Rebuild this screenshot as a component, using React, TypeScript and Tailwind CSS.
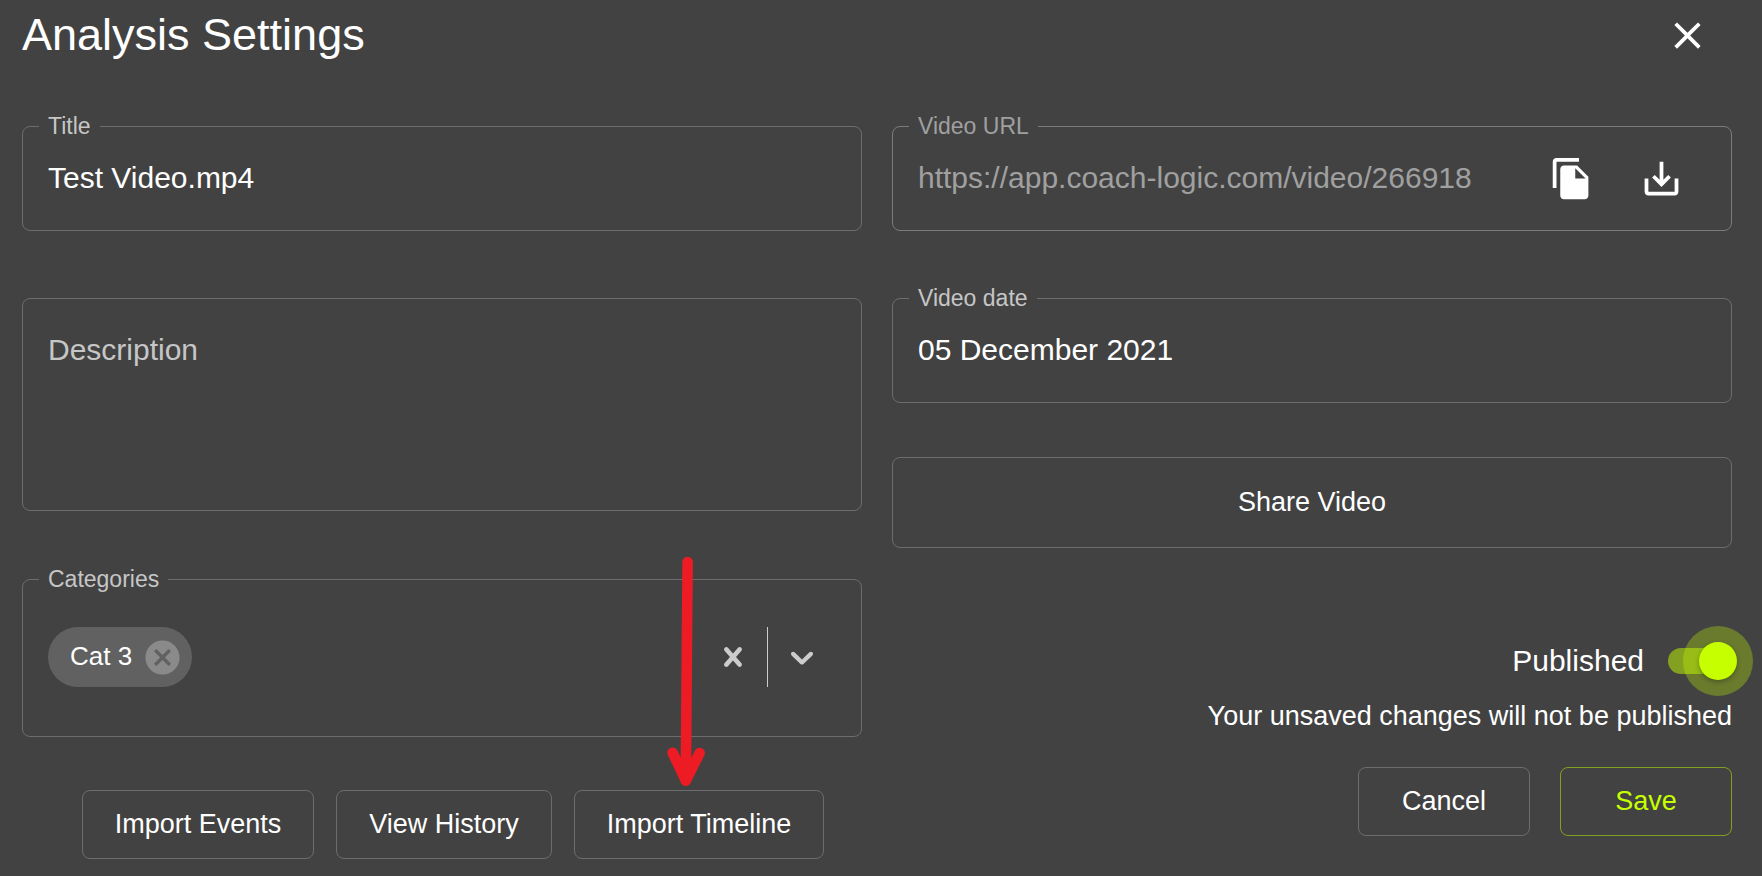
import { useState, type ReactNode } from "react";
import { MdCancel, MdClose, MdFileCopy, MdSaveAlt } from "react-icons/md";

type OutlinedProps = {
  label: string;
  htmlFor: string;
  disabled?: boolean;
  children: ReactNode;
};

function Outlined({ label, htmlFor, disabled = false, children }: OutlinedProps) {
  return (
    <fieldset
      className={
        disabled
          ? "min-w-0 rounded-lg border border-[#7b7b7b] text-[#a0a0a0]"
          : "min-w-0 rounded-lg border border-[#6d6d6d] text-[#c6c6c6]"
      }
    >
      <legend className="ml-4 h-6 px-[9px] text-[23px] leading-6">
        <label htmlFor={htmlFor} className="block">
          {label}
        </label>
      </legend>
      {children}
    </fieldset>
  );
}

const outlineButton =
  "flex items-center justify-center whitespace-nowrap rounded-lg border border-[#6d6d6d] pb-0.5 text-[27px] leading-8 text-white";

function PointerArrow() {
  return (
    <svg
      aria-hidden="true"
      viewBox="0 0 40 232"
      className="pointer-events-none absolute bottom-full left-[92px] mb-1 h-[232px] w-10"
      fill="#ed1c24"
      stroke="#ed1c24"
      strokeWidth="10.6"
      strokeLinecap="round"
      strokeLinejoin="round"
    >
      <path d="M21.6 8 L19.8 226.5" />
      <path d="M6.6 198.7 L19.8 226.5 L33.6 199" fill="none" />
      <path d="M14 205 L19.8 222 L26 205 Z" stroke="none" />
    </svg>
  );
}

export default function App() {
  const [title, setTitle] = useState("Test Video.mp4");
  const [date, setDate] = useState("05 December 2021");
  const [description, setDescription] = useState("");
  const [published, setPublished] = useState(true);

  return (
    <main className="min-h-screen overflow-hidden bg-[#424242] pt-2 pr-[30px] pb-4 pl-[22px] font-['Liberation_Sans',Arial,sans-serif] text-white">
      <header className="flex items-center justify-between">
        <h1 className="text-[45px] leading-[54px]">Analysis Settings</h1>
        <button type="button" aria-label="Close" className="mr-[22px]">
          <MdClose size={45} />
        </button>
      </header>

      <form className="mt-[52px] grid grid-cols-2 gap-[30px]" onSubmit={(e) => e.preventDefault()}>
        <div className="flex min-w-0 flex-col">
          <Outlined label="Title" htmlFor="title">
            <input
              id="title"
              type="text"
              value={title}
              onChange={(e) => setTitle(e.target.value)}
              className="block w-full bg-transparent px-[25px] pt-[22px] pb-[34px] text-[30px] leading-9 text-white outline-none"
            />
          </Outlined>

          <textarea
            aria-label="Description"
            placeholder="Description"
            value={description}
            onChange={(e) => setDescription(e.target.value)}
            className="mt-[67px] block h-[213px] w-full resize-none rounded-lg border border-[#6d6d6d] bg-transparent px-[25px] py-[33px] text-[30px] leading-9 text-white outline-none placeholder:text-[#c6c6c6]"
          />

          <div className="mt-14">
            <Outlined label="Categories" htmlFor="categories">
              <div className="flex items-center pt-9 pr-[25px] pb-[49px] pl-[25px]">
                <span className="flex h-[60px] items-center rounded-full bg-[#616161] pr-[9px] pl-[22px] text-[26px] leading-8 text-white">
                  <span className="pb-0.5">Cat 3</span>
                  <button type="button" aria-label="Remove Cat 3" className="ml-2.5 text-[#8a8a8a]">
                    <MdCancel size={41} />
                  </button>
                </span>
                <input
                  id="categories"
                  type="text"
                  className="h-9 min-w-0 flex-1 bg-transparent px-1 text-[30px] leading-9 text-white outline-none"
                />
                <button type="button" aria-label="Clear categories" className="px-[15px] text-[#cccccc]">
                  <svg viewBox="0 0 20 20" className="size-[38px]" fill="currentColor">
                    <path d="M14.348 14.849c-0.469 0.469-1.229 0.469-1.697 0l-2.651-3.030-2.651 3.029c-0.469 0.469-1.229 0.469-1.697 0-0.469-0.469-0.469-1.229 0-1.697l2.758-3.15-2.759-3.152c-0.469-0.469-0.469-1.228 0-1.697s1.228-0.469 1.697 0l2.652 3.031 2.651-3.031c0.469-0.469 1.228-0.469 1.697 0s0.469 1.229 0 1.697l-2.758 3.152 2.758 3.15c0.469 0.469 0.469 1.229 0 1.698z" />
                  </svg>
                </button>
                <span className="h-[60px] w-px bg-[#cccccc]" />
                <button type="button" aria-label="Show categories" className="px-[15px] text-[#cccccc]">
                  <svg viewBox="0 0 20 20" className="size-[38px]" fill="currentColor">
                    <path d="M4.516 7.548c0.436-0.446 1.043-0.481 1.576 0l3.908 3.747 3.908-3.747c0.533-0.481 1.141-0.446 1.574 0 0.436 0.445 0.408 1.197 0 1.615-0.406 0.418-4.695 4.502-4.695 4.502-0.217 0.223-0.502 0.335-0.787 0.335s-0.57-0.112-0.789-0.335c0 0-4.287-4.084-4.695-4.502s-0.436-1.17 0-1.615z" />
                  </svg>
                </button>
              </div>
            </Outlined>
          </div>

          <div className="mt-[53px] flex justify-center gap-[22px] pl-[22px]">
            <button type="button" className={`${outlineButton} h-[69px] px-8`}>
              Import Events
            </button>
            <button type="button" className={`${outlineButton} h-[69px] px-8`}>
              View History
            </button>
            <div className="relative">
              <button type="button" className={`${outlineButton} h-[69px] px-8`}>
                Import Timeline
              </button>
              <PointerArrow />
            </div>
          </div>
        </div>

        <div className="flex min-w-0 flex-col">
          <Outlined label="Video URL" htmlFor="video-url" disabled>
            <div className="flex items-center pr-[47px]">
              <input
                id="video-url"
                type="text"
                disabled
                value="https://app.coach-logic.com/video/266918"
                className="block min-w-0 flex-1 bg-transparent pt-[22px] pb-[34px] pl-[25px] text-[30px] leading-9 text-[#a0a0a0] outline-none"
              />
              <div className="flex items-center gap-[45px] pb-3 text-white">
                <button type="button" aria-label="Copy video URL">
                  <MdFileCopy size={45} />
                </button>
                <button type="button" aria-label="Download video">
                  <MdSaveAlt size={45} />
                </button>
              </div>
            </div>
          </Outlined>

          <div className="mt-[55px]">
            <Outlined label="Video date" htmlFor="video-date">
              <input
                id="video-date"
                type="text"
                value={date}
                onChange={(e) => setDate(e.target.value)}
                className="block w-full bg-transparent px-[25px] pt-[22px] pb-[34px] text-[30px] leading-9 text-white outline-none"
              />
            </Outlined>
          </div>

          <button type="button" className={`${outlineButton} mt-[54px] h-[91px] w-full`}>
            Share Video
          </button>

          <label className="mt-[95px] flex items-center gap-6 self-end text-[30px] leading-9">
            Published
            <span className="relative h-[26px] w-16">
              <input
                type="checkbox"
                role="switch"
                checked={published}
                onChange={(e) => setPublished(e.target.checked)}
                className="absolute inset-0 appearance-none rounded-full bg-[#84a021] outline-none"
              />
              <span
                className={
                  published
                    ? "pointer-events-none absolute -top-[22px] -right-[21px] flex size-[70px] items-center justify-center rounded-full bg-[#c6ff00]/30"
                    : "pointer-events-none absolute -top-[22px] -left-[21px] flex size-[70px] items-center justify-center rounded-full"
                }
              >
                <span className="size-[38px] rounded-full bg-[#c6ff00] shadow-[0_2px_5px_rgba(0,0,0,0.3)]" />
              </span>
            </span>
          </label>
          <p className="mt-[21px] text-right text-[27px] leading-8">Your unsaved changes will not be published</p>
          <div className="mt-[35px] flex justify-end gap-[30px]">
            <button type="button" className={`${outlineButton} h-[69px] w-[172px]`}>
              Cancel
            </button>
            <button
              type="submit"
              className="flex h-[69px] w-[172px] items-center justify-center rounded-lg border border-[#84a021] pb-0.5 text-[27px] leading-8 text-[#c6ff00]"
            >
              Save
            </button>
          </div>
        </div>
      </form>
    </main>
  );
}
